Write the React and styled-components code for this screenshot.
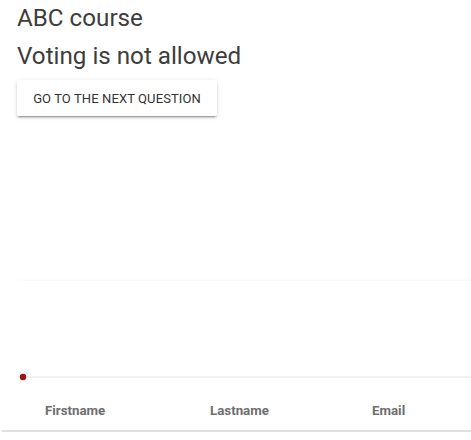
import React from 'react';
import styled, { createGlobalStyle } from 'styled-components';

const GlobalStyle = createGlobalStyle`
  body {
    margin: 0;
    background: #fff;
    font-family: Roboto, "Liberation Sans", sans-serif;
  }
`;

const Page = styled.div`
  width: 471px;
  height: 440px;
  overflow: hidden;
  padding-left: 2px;
  box-sizing: border-box;
`;

const Header = styled.div`
  padding-left: 15px;
`;

const Title = styled.div`
  font-size: 24.2px;
  line-height: 36px;
  color: #3d3d3d;
  font-weight: 400;
  margin-top: ${(props) => props.gap || 0}px;
`;

const Button = styled.button`
  margin-top: 6px;
  width: 200px;
  height: 36px;
  border: none;
  border-radius: 2px;
  background: #fff;
  color: #333;
  font-family: Roboto, "Liberation Sans", sans-serif;
  font-size: 13px;
  font-weight: 400;
  letter-spacing: 0.1px;
  text-transform: uppercase;
  box-shadow: 0 2px 2px 0 rgba(0, 0, 0, 0.14), 0 3px 1px -2px rgba(0, 0, 0, 0.2),
    0 1px 5px 0 rgba(0, 0, 0, 0.12);
  cursor: pointer;
`;

const Chart = styled.svg`
  display: block;
  margin-left: 15px;
  margin-top: 4px;
`;

const Table = styled.div`
  display: grid;
  grid-template-columns: 165px 162px 1fr;
  height: 40px;
  align-items: center;
  border-bottom: 2px solid #e0e0e0;
`;

const HeadCell = styled.div`
  padding-left: 43px;
  font-size: 13.3px;
  font-weight: 700;
  color: #6e6e6e;
`;

const App = () => {
  return (
    <Page>
      <GlobalStyle />
      <Header>
        <Title>ABC course</Title>
        <Title gap={2}>Voting is not allowed</Title>
        <Button>Go to the next question</Button>
      </Header>
      <Chart width="454" height="270" viewBox="0 0 454 270">
        <line x1="0" y1="160" x2="454" y2="160" stroke="#f4f4f4" strokeWidth="1" />
        <line x1="0" y1="257" x2="454" y2="257" stroke="#e4e4e4" strokeWidth="1.2" />
        <circle cx="6" cy="257" r="3.2" fill="#a50f0f" />
      </Chart>
      <Table>
        <HeadCell>Firstname</HeadCell>
        <HeadCell>Lastname</HeadCell>
        <HeadCell>Email</HeadCell>
      </Table>
    </Page>
  );
};

export default App;
